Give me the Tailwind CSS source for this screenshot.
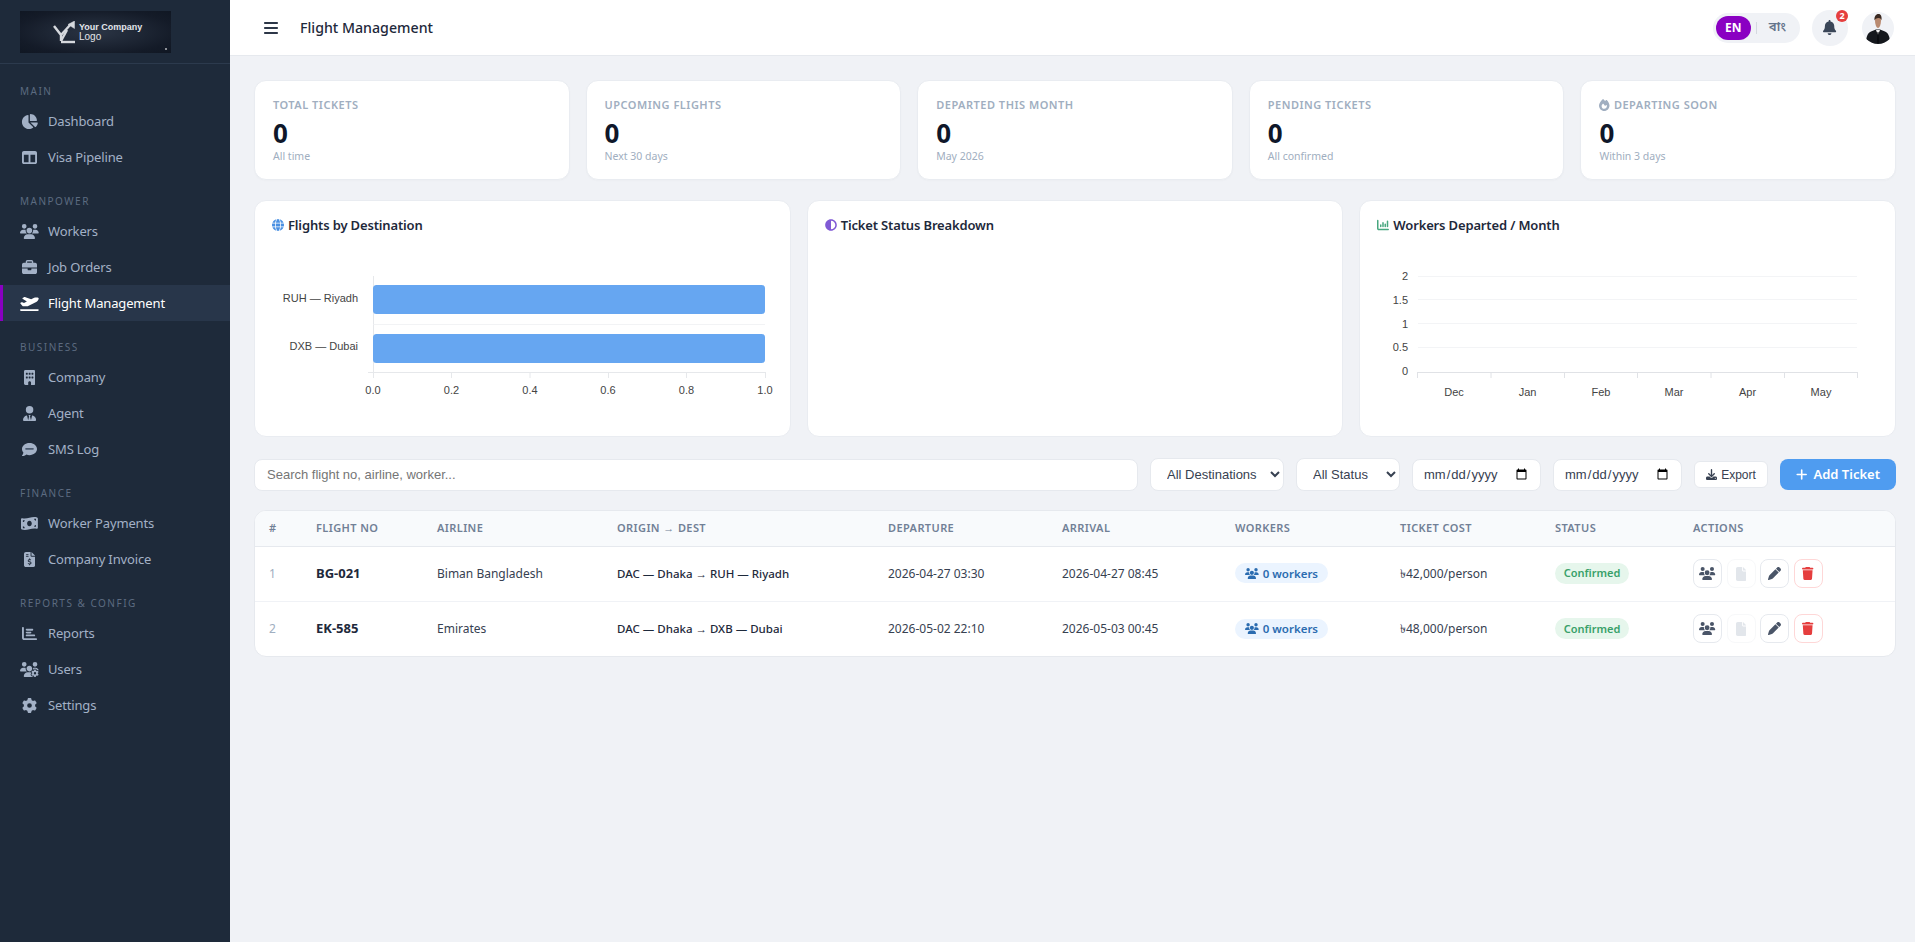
<!DOCTYPE html>
<html lang="en">
<head>
<meta charset="utf-8">
<title>Flight Management</title>
<script src="https://cdn.jsdelivr.net/npm/@tailwindcss/browser@4"></script>
</head>
<body class="h-screen overflow-hidden bg-[#f0f2f6] font-['Noto_Sans','Open_Sans',sans-serif]">
<div class="flex h-[942px]">
  <aside class="w-[230px] shrink-0 bg-[#1e2a3a] text-[#a3b1c6]">
    <div class="h-[64px] border-b border-[#2c3a4d] pl-5 pt-[11px]">
      <div class="relative flex h-[42px] w-[151px] items-center gap-[4px] bg-[radial-gradient(ellipse_at_center,#2b3545_0%,#141b28_75%,#101723_100%)] pl-[33px]">
        <svg viewBox="0 0 22 23" class="h-[23px] w-[22px] fill-none stroke-[#d6d9de]" stroke-width="2.400"><path d="M1 5l7 9v6"/><path d="M8 14L18 3"/><path d="M14 9L8 20"/><path d="M8 21h14"/><path d="M21.500 0v7.500l-6.500-4z" class="fill-[#d6d9de]" stroke-width="0.500"/></svg>
        <div class="font-['Liberation_Sans',sans-serif] text-[9px] leading-[10px] font-bold text-[#e2e5ea]">Your Company<br><span class="font-normal text-[10px]">Logo</span></div>
        <span class="absolute bottom-[3px] right-[4px] h-[2px] w-[2px] rounded-full bg-white/70"></span>
      </div>
    </div>
    <nav class="pt-px text-[13px] leading-[36px] tracking-[-0.15px]">
      <div class="pb-[5px] pl-5 pt-[19px] text-[10px] uppercase leading-[14px] tracking-[1.5px] text-[#5c6b80]">Main</div>
      <a class="flex h-[36px] items-center gap-[9px] pl-5"><span class="flex w-[19px] justify-center"><svg viewBox="0 0 576 512" class="h-[15px] fill-[#a3b1c6]"><path d="M304 240V16.6c0-9 7-16.6 16-16.6C443.7 0 544 100.3 544 224c0 9-7.6 16-16.6 16H304zM32 272C32 150.7 122.1 50.3 239 34.3c9.2-1.3 17 6.1 17 15.4V288L412.5 444.5c6.7 6.7 6.2 17.7-1.5 23.1C371.8 495.6 323.8 512 272 512C139.5 512 32 404.6 32 272zm526.4 16c9.3 0 16.6 7.8 15.4 17c-7.7 55.9-34.6 105.6-73.9 142.3c-6 5.6-15.4 5.2-21.2-.7L320 288H558.4z"/></svg></span>Dashboard</a>
      <a class="flex h-[36px] items-center gap-[9px] pl-5"><span class="flex w-[19px] justify-center"><svg viewBox="0 0 512 512" class="h-[15px] fill-[#a3b1c6]"><path d="M0 96C0 60.7 28.7 32 64 32H448c35.3 0 64 28.7 64 64V416c0 35.3-28.7 64-64 64H64c-35.3 0-64-28.7-64-64V96zm64 64V416H224V160H64zm384 0H288V416H448V160z"/></svg></span>Visa Pipeline</a>
      <div class="pb-[5px] pl-5 pt-[19px] text-[10px] uppercase leading-[14px] tracking-[1.5px] text-[#5c6b80]">Manpower</div>
      <a class="flex h-[36px] items-center gap-[9px] pl-5"><span class="flex w-[19px] justify-center"><svg viewBox="0 0 640 512" class="h-[15px] fill-[#a3b1c6]"><use href="#users"/></svg></span>Workers</a>
      <a class="flex h-[36px] items-center gap-[9px] pl-5"><span class="flex w-[19px] justify-center"><svg viewBox="0 0 512 512" class="h-[15px] fill-[#a3b1c6]"><path d="M184 48H328c4.4 0 8 3.6 8 8V96H176V56c0-4.4 3.6-8 8-8zm-56 8V96H64C28.7 96 0 124.7 0 160v96H192 320 512V160c0-35.3-28.7-64-64-64H384V56c0-30.9-25.1-56-56-56H184c-30.9 0-56 25.1-56 56zM512 288H320v32c0 17.7-14.3 32-32 32H224c-17.7 0-32-14.3-32-32V288H0V416c0 35.3 28.7 64 64 64H448c35.3 0 64-28.7 64-64V288z"/></svg></span>Job Orders</a>
      <a class="flex h-[36px] items-center gap-[9px] border-l-[3px] border-[#8a00c2] bg-[#28364a] pl-[17px] text-white"><span class="flex w-[19px] justify-center"><svg viewBox="0 0 640 512" class="h-[15px] fill-white"><path d="M381 114.9L186.1 41.8c-16.7-6.2-35.2-5.3-51.1 2.7L89.1 67.4C78 73 77.2 88.5 87.6 95.2l146.9 94.5L136 240 77.8 214.1c-8.7-3.9-18.8-3.7-27.3 .6L18.3 230.8c-9.3 4.7-11.8 16.8-5 24.7l73.1 85.3c6.1 7.1 15 11.2 24.3 11.2H248.4c5 0 9.9-1.2 14.3-3.4L535.6 212.2c46.5-23.3 82.5-63.3 100.8-112C645.9 75 627.2 48 600.2 48H542.8c-20.2 0-40.2 4.8-58.2 14L381 114.9zM0 480c0 17.7 14.3 32 32 32H608c17.7 0 32-14.3 32-32s-14.3-32-32-32H32c-17.7 0-32 14.3-32 32z"/></svg></span>Flight Management</a>
      <div class="pb-[5px] pl-5 pt-[19px] text-[10px] uppercase leading-[14px] tracking-[1.5px] text-[#5c6b80]">Business</div>
      <a class="flex h-[36px] items-center gap-[9px] pl-5"><span class="flex w-[19px] justify-center"><svg viewBox="0 0 384 512" class="h-[15px] fill-[#a3b1c6]"><path d="M48 0C21.5 0 0 21.5 0 48V464c0 26.5 21.5 48 48 48h96V432c0-26.5 21.5-48 48-48s48 21.5 48 48v80h96c26.5 0 48-21.5 48-48V48c0-26.5-21.5-48-48-48H48zM64 240c0-8.8 7.2-16 16-16h32c8.8 0 16 7.2 16 16v32c0 8.8-7.2 16-16 16H80c-8.8 0-16-7.2-16-16V240zm112-16h32c8.8 0 16 7.2 16 16v32c0 8.8-7.2 16-16 16H176c-8.8 0-16-7.2-16-16V240c0-8.8 7.2-16 16-16zm80 16c0-8.8 7.2-16 16-16h32c8.8 0 16 7.2 16 16v32c0 8.8-7.2 16-16 16H272c-8.8 0-16-7.2-16-16V240zM80 96h32c8.8 0 16 7.2 16 16v32c0 8.8-7.2 16-16 16H80c-8.8 0-16-7.2-16-16V112c0-8.8 7.2-16 16-16zm80 16c0-8.8 7.2-16 16-16h32c8.8 0 16 7.2 16 16v32c0 8.8-7.2 16-16 16H176c-8.8 0-16-7.2-16-16V112zM272 96h32c8.8 0 16 7.2 16 16v32c0 8.8-7.2 16-16 16H272c-8.8 0-16-7.2-16-16V112c0-8.8 7.2-16 16-16z"/></svg></span>Company</a>
      <a class="flex h-[36px] items-center gap-[9px] pl-5"><span class="flex w-[19px] justify-center"><svg viewBox="0 0 448 512" class="h-[15px] fill-[#a3b1c6]"><path d="M96 128a128 128 0 1 0 256 0A128 128 0 1 0 96 128zm94.5 200.2l18.6 31L175.8 483.1l-36-146.9c-2-8.1-9.8-13.4-17.9-11.3C51.9 342.4 0 405.8 0 481.3c0 17 13.8 30.7 30.7 30.7H162.5c0 0 0 0 .1 0H168 280h5.5c0 0 0 0 .1 0H417.3c17 0 30.7-13.8 30.7-30.7c0-75.5-51.9-138.9-121.9-156.4c-8.1-2-15.9 3.3-17.9 11.3l-36 146.9L238.9 359.2l18.6-31c6.4-10.7-1.3-24.2-13.7-24.2H224 204.3c-12.4 0-20.1 13.6-13.7 24.2z"/></svg></span>Agent</a>
      <a class="flex h-[36px] items-center gap-[9px] pl-5"><span class="flex w-[19px] justify-center"><svg viewBox="0 0 512 512" class="h-[15px] fill-[#a3b1c6]"><path d="M256 448c141.4 0 256-93.1 256-208S397.4 32 256 32S0 125.1 0 240c0 45.1 17.7 86.8 47.7 120.9c-1.9 24.5-11.4 46.3-21.4 62.9c-5.5 9.2-11.1 16.6-15.2 21.6c-2.1 2.5-3.7 4.4-4.9 5.7c-.6 .6-1 1.1-1.3 1.4l-.3 .3c-4.6 4.6-5.9 11.4-3.4 17.4c2.5 6 8.3 9.9 14.8 9.9c28.7 0 57.6-8.9 81.6-19.3c22.9-10 42.4-21.9 54.3-30.6c31.8 11.5 67 17.9 104.1 17.9z"/><rect x="110" y="205" width="292" height="60" rx="24" class="fill-[#4b5a6f]"/></svg></span>SMS Log</a>
      <div class="pb-[5px] pl-5 pt-[19px] text-[10px] uppercase leading-[14px] tracking-[1.5px] text-[#5c6b80]">Finance</div>
      <a class="flex h-[36px] items-center gap-[9px] pl-5"><span class="flex w-[19px] justify-center"><svg viewBox="0 0 576 512" class="h-[15px] fill-[#a3b1c6]"><path d="M0 112.5V422.3c0 18 10.1 35 27 41.3c87 32.5 174 10.3 261-11.9c79.8-20.3 159.6-40.7 239.3-18.9c23 6.3 48.7-9.5 48.7-33.4V89.7c0-18-10.1-35-27-41.3C462 15.9 375 38.1 288 60.3C208.2 80.6 128.4 100.9 48.7 79.1C25.6 72.8 0 88.6 0 112.5zM288 352c-44.2 0-80-43-80-96s35.8-96 80-96s80 43 80 96s-35.8 96-80 96zM64 352c35.3 0 64 28.7 64 64H64V352zm64-208c0 35.3-28.7 64-64 64V144h64zM512 304v64H448c0-35.3 28.7-64 64-64zM448 96h64v64c-35.3 0-64-28.7-64-64z"/></svg></span>Worker Payments</a>
      <a class="flex h-[36px] items-center gap-[9px] pl-5"><span class="flex w-[19px] justify-center"><svg viewBox="0 0 384 512" class="h-[15px] fill-[#a3b1c6]"><path d="M64 0C28.7 0 0 28.7 0 64V448c0 35.3 28.7 64 64 64H320c35.3 0 64-28.7 64-64V160H256c-17.7 0-32-14.3-32-32V0H64zM256 0V128H384L256 0zM64 80c0-8.8 7.2-16 16-16h64c8.8 0 16 7.2 16 16s-7.2 16-16 16H80c-8.8 0-16-7.2-16-16zm0 64c0-8.8 7.2-16 16-16h64c8.8 0 16 7.2 16 16s-7.2 16-16 16H80c-8.8 0-16-7.2-16-16zm128 72c8.8 0 16 7.2 16 16v17.3c8.5 1.2 16.7 3.1 24.1 5.1c8.5 2.3 13.6 11 11.3 19.6s-11 13.6-19.6 11.3c-11.1-3-22-5.2-32.1-5.3c-8.4-.1-17.4 1.8-23.6 5.5c-5.7 3.4-8.1 7.3-8.1 12.8c0 3.7 1.3 6.5 7.3 10.1c6.9 4.1 16.6 7.1 29.2 10.9l.5 .1c11.3 3.4 25.3 7.6 36.3 14.6c12.1 7.6 22.4 19.7 22.7 38.2c.3 19.3-9.6 33.3-22.9 41.6c-7.7 4.8-16.4 7.6-25.1 9.1V440c0 8.8-7.2 16-16 16s-16-7.2-16-16V422.2c-11.2-2.1-21.7-5.7-30.9-8.9c-2.1-.7-4.2-1.4-6.2-2.1c-8.4-2.8-12.9-11.9-10.1-20.2s11.9-12.9 20.2-10.1c2.5 .8 4.8 1.6 7.1 2.4c13.6 4.6 24.6 8.4 36.3 8.7c9.1 .3 17.9-1.7 23.7-5.3c5.1-3.2 7.9-7.3 7.8-14c-.1-4.6-1.8-7.8-7.7-11.6c-6.8-4.3-16.5-7.4-29-11.2l-1.6-.5c-11-3.3-24.3-7.3-34.8-13.7c-12-7.2-22.6-18.9-22.7-37.3c-.1-19.4 10.8-32.8 23.8-40.5c7.5-4.4 15.8-7.2 24.1-8.7V232c0-8.8 7.2-16 16-16z"/></svg></span>Company Invoice</a>
      <div class="pb-[5px] pl-5 pt-[19px] text-[10px] uppercase leading-[14px] tracking-[1.5px] text-[#5c6b80]">Reports &amp; Config</div>
      <a class="flex h-[36px] items-center gap-[9px] pl-5"><span class="flex w-[19px] justify-center"><svg viewBox="0 0 512 512" class="h-[15px] fill-[#a3b1c6]"><path d="M32 32c17.7 0 32 14.3 32 32V400c0 8.8 7.2 16 16 16H480c17.7 0 32 14.3 32 32s-14.3 32-32 32H80c-44.2 0-80-35.8-80-80V64C0 46.3 14.3 32 32 32zm96 96c0-17.7 14.3-32 32-32l192 0c17.7 0 32 14.3 32 32s-14.3 32-32 32l-192 0c-17.7 0-32-14.3-32-32zm32 64H288c17.7 0 32 14.3 32 32s-14.3 32-32 32H160c-17.7 0-32-14.3-32-32s14.3-32 32-32zm0 96H416c17.7 0 32 14.3 32 32s-14.3 32-32 32H160c-17.7 0-32-14.3-32-32s14.3-32 32-32z"/></svg></span>Reports</a>
      <a class="flex h-[36px] items-center gap-[9px] pl-5"><span class="flex w-[19px] justify-center"><svg viewBox="0 0 640 512" class="h-[15px] fill-[#a3b1c6]"><path d="M144 160A80 80 0 1 0 144 0a80 80 0 1 0 0 160zm368 0A80 80 0 1 0 512 0a80 80 0 1 0 0 160zM0 298.7C0 310.4 9.6 320 21.3 320H234.7c.2 0 .4 0 .7 0c-26.6-23.5-43.3-57.8-43.3-96c0-7.6 .7-15 1.9-22.3c-13.6-6.3-28.7-9.7-44.6-9.7H106.7C47.8 192 0 239.8 0 298.7zM320 320c24 0 45.9-8.8 62.7-23.3c2.5-3.7 5.2-7.3 8-10.7c2.7-3.3 5.7-6.1 9-8.3C410 262.3 416 243.9 416 224c0-53-43-96-96-96s-96 43-96 96s43 96 96 96zm65.4 60.2c-10.3-5.9-18.1-16.2-20.8-28.2H261.3C187.7 352 128 411.7 128 485.3c0 14.7 11.9 26.7 26.7 26.7H455.2c-2.1-5.2-3.2-10.9-3.2-16.4v-3c-1.3-.7-2.7-1.5-4-2.3l-2.6 1.5c-16.8 9.7-40.5 8-54.7-9.7c-4.5-5.6-8.6-11.5-12.4-17.6l-2.6-4.5c-3.4-6.2-6.4-12.6-9-19.3c-8.2-21.2 2.2-42.6 19-52.3l2.7-1.5c0-.8 0-1.5 0-2.3s0-1.5 0-2.3l-2.7-1.5zM533.3 192H490.7c-15.9 0-31 3.5-44.6 9.7c1.3 7.2 1.9 14.7 1.9 22.3c0 17.4-3.5 33.9-9.7 49c2.5 .9 4.9 2 7.1 3.3l2.6 1.5c1.3-.8 2.6-1.6 4-2.3v-3c0-19.4 13.3-39.1 35.8-42.6c7.9-1.2 16-1.9 24.2-1.9s16.3 .6 24.2 1.9c22.5 3.5 35.8 23.2 35.8 42.6v3c1.3 .7 2.7 1.5 4 2.3l2.6-1.5c16.8-9.7 40.5-8 54.7 9.7c2.3 2.8 4.5 5.8 6.6 8.7c-2.1-57.1-49-102.7-106.6-102.7zm91.3 163.9c6.3-3.6 9.5-11.1 6.8-18c-2.1-5.5-4.6-10.8-7.4-15.9l-2.3-4c-3.1-5.1-6.5-9.9-10.2-14.5c-4.6-5.7-12.7-6.7-19-3L574.4 311c-8.9-7.6-19.1-13.6-30.4-17.6v-21c0-7.3-4.9-13.8-12.1-14.9c-6.5-1-13.1-1.5-19.9-1.5s-13.4 .5-19.9 1.5c-7.2 1.1-12.1 7.6-12.1 14.9v21c-11.2 4-21.5 9.9-30.4 17.6l-18.2-10.5c-6.3-3.6-14.4-2.7-19 3c-3.7 4.6-7.1 9.4-10.2 14.5l-2.3 3.9c-2.8 5.1-5.3 10.4-7.4 15.9c-2.6 6.8 .5 14.3 6.8 17.9l18.2 10.5c-1 5.7-1.6 11.6-1.6 17.6s.6 11.9 1.6 17.5l-18.2 10.5c-6.3 3.6-9.5 11.1-6.8 17.9c2.1 5.5 4.6 10.7 7.4 15.8l2.4 4.1c3 5.1 6.4 9.9 10.1 14.5c4.6 5.7 12.7 6.7 19 3L449.6 457c8.9 7.6 19.2 13.6 30.4 17.6v21c0 7.3 4.9 13.8 12.1 14.9c6.5 1 13.1 1.5 19.9 1.5s13.4-.5 19.9-1.5c7.2-1.1 12.1-7.6 12.1-14.9v-21c11.2-4 21.5-9.9 30.4-17.6l18.2 10.5c6.3 3.6 14.4 2.7 19-3c3.7-4.6 7.1-9.4 10.2-14.4l2.4-4.2c2.8-5.1 5.3-10.3 7.4-15.8c2.6-6.8-.5-14.3-6.8-17.9l-18.2-10.5c1-5.7 1.6-11.6 1.6-17.5s-.6-11.9-1.6-17.6l18.2-10.5zM472 384a40 40 0 1 1 80 0 40 40 0 1 1 -80 0z"/></svg></span>Users</a>
      <a class="flex h-[36px] items-center gap-[9px] pl-5"><span class="flex w-[19px] justify-center"><svg viewBox="0 0 512 512" class="h-[15px] fill-[#a3b1c6]"><path d="M495.9 166.6c3.2 8.7 .5 18.4-6.4 24.6l-43.3 39.4c1.1 8.3 1.7 16.8 1.7 25.4s-.6 17.1-1.7 25.4l43.3 39.4c6.9 6.2 9.6 15.9 6.4 24.6c-4.4 11.9-9.7 23.3-15.8 34.3l-4.7 8.1c-6.6 11-14 21.4-22.1 31.2c-5.9 7.2-15.7 9.6-24.5 6.8l-55.7-17.7c-13.4 10.3-28.2 18.9-44 25.4l-12.5 57.1c-2 9.1-9 16.3-18.2 17.8c-13.8 2.3-28 3.5-42.5 3.5s-28.7-1.2-42.5-3.5c-9.2-1.5-16.2-8.7-18.2-17.8l-12.5-57.1c-15.8-6.5-30.6-15.1-44-25.4L83.1 425.9c-8.8 2.8-18.6 .3-24.5-6.8c-8.1-9.8-15.5-20.2-22.1-31.2l-4.7-8.1c-6.1-11-11.4-22.4-15.8-34.3c-3.2-8.7-.5-18.4 6.4-24.6l43.3-39.4C64.6 273.1 64 264.6 64 256s.6-17.1 1.7-25.4L22.4 191.2c-6.9-6.2-9.6-15.9-6.4-24.6c4.4-11.9 9.7-23.3 15.8-34.3l4.7-8.1c6.6-11 14-21.4 22.1-31.2c5.9-7.2 15.7-9.6 24.5-6.8l55.7 17.7c13.4-10.3 28.2-18.9 44-25.4l12.5-57.1c2-9.1 9-16.3 18.2-17.8C227.3 1.2 241.5 0 256 0s28.7 1.2 42.5 3.5c9.2 1.5 16.2 8.7 18.2 17.8l12.5 57.1c15.8 6.5 30.6 15.1 44 25.4l55.7-17.7c8.8-2.8 18.6-.3 24.5 6.8c8.1 9.8 15.5 20.2 22.1 31.2l4.7 8.1c6.1 11 11.4 22.4 15.8 34.3zM256 336a80 80 0 1 0 0-160 80 80 0 1 0 0 160z"/></svg></span>Settings</a>
    </nav>
  </aside>

  <main class="min-w-0 flex-1">
    <header class="flex h-[56px] items-center border-b border-[#e6e9ee] bg-white pl-[34px] pr-[21px]">
      <svg viewBox="0 0 448 512" class="h-[16px] w-[14px] fill-[#2d3748]"><path d="M0 96C0 78.3 14.3 64 32 64H416c17.7 0 32 14.3 32 32s-14.3 32-32 32H32C14.3 128 0 113.7 0 96zM0 256c0-17.7 14.3-32 32-32H416c17.7 0 32 14.3 32 32s-14.3 32-32 32H32c-17.7 0-32-14.3-32-32zM448 416c0 17.7-14.3 32-32 32H32c-17.7 0-32-14.3-32-32s14.3-32 32-32H416c17.7 0 32 14.3 32 32z"/></svg>
      <h1 class="ml-[22px] text-[14.200px] font-medium text-[#1e293b]">Flight Management</h1>
      <div class="ml-auto flex items-center rounded-full bg-[#f0f2f6] p-[3px] pr-[14px]">
        <span class="flex h-[24px] w-[35px] items-center justify-center rounded-full bg-[#8a00c2] text-[12px] font-bold text-white">EN</span>
        <span class="ml-[5px] h-[12px] w-px bg-[#d5d9e0]"></span>
        <span class="ml-[12px] font-['Noto_Sans_Bengali','Noto_Sans',sans-serif] text-[13px] font-semibold text-[#64748b]">বাং</span>
      </div>
      <div class="relative ml-[12px] flex h-[36px] w-[36px] items-center justify-center rounded-full bg-[#f0f2f6]">
        <svg viewBox="0 0 448 512" class="h-[15px] fill-[#3a4658]"><path d="M224 0c-17.7 0-32 14.3-32 32V51.2C119 66 64 130.6 64 208v18.8c0 47-17.3 92.4-48.5 127.6l-7.4 8.3c-8.4 9.4-10.4 22.9-5.3 34.4S19.4 416 32 416H416c12.6 0 24-7.4 29.2-18.9s3.1-25-5.3-34.4l-7.4-8.3C401.3 319.2 384 273.9 384 226.8V208c0-77.4-55-142-128-156.8V32c0-17.7-14.3-32-32-32zm45.3 493.3c12-12 18.7-28.3 18.7-45.3H224 160c0 17 6.7 33.3 18.7 45.3s28.3 18.7 45.3 18.7s33.3-6.7 45.3-18.7z"/></svg>
        <span class="absolute right-0 top-0 flex h-[12px] w-[12px] items-center justify-center rounded-full bg-[#e53e3e] text-[9px] font-bold leading-none text-white">2</span>
      </div>
      <svg viewBox="0 0 32 32" class="ml-[14px] h-[32px] w-[32px] rounded-full bg-[#f0f2f6]">
        <path d="M4 32c0-7 1.500-11 5-12.500l5-2h4l5 2c3.500 1.500 5 5.500 5 12.500z" fill="#15181d"/>
        <path d="M14 18l2 5 2-5z" fill="#f2f2f2"/><path d="M15.500 20h1l.6 10-1.100 2-1.100-2z" fill="#0a0c10"/>
        <path d="M13 8c0-2.500 1.200-4 3-4s3 1.500 3 4c0 4-1.200 8-3 8s-3-4-3-8z" fill="#b98a70"/>
        <path d="M12.500 8.500c-.5-4 1.500-6.500 4-6.500s3.500 2.500 3 6.500c-.3-1.500-1-2.500-3-2.500s-3.500 1-4 2.500z" fill="#3a2a22"/>
      </svg>
    </header>

    <div class="pb-6 pl-[24px] pr-[19px] pt-[24px]">
      <section class="grid grid-cols-5 gap-4">
        <div class="h-[100px] rounded-[12px] border border-[#e9ecf1] bg-white px-[18px] pt-[15px] shadow-[0_1px_2px_rgba(0,0,0,0.02)]">
          <div class="text-[11px] font-semibold uppercase leading-[18px] tracking-[0.5px] text-[#a0aec0]">Total Tickets</div>
          <div class="mt-[5px] text-[26px] font-bold leading-[28px] text-[#0f172a]">0</div>
          <div class="text-[10.500px] leading-[18px] text-[#a0aec0]">All time</div>
        </div>
        <div class="h-[100px] rounded-[12px] border border-[#e9ecf1] bg-white px-[18px] pt-[15px] shadow-[0_1px_2px_rgba(0,0,0,0.02)]">
          <div class="text-[11px] font-semibold uppercase leading-[18px] tracking-[0.5px] text-[#a0aec0]">Upcoming Flights</div>
          <div class="mt-[5px] text-[26px] font-bold leading-[28px] text-[#0f172a]">0</div>
          <div class="text-[10.500px] leading-[18px] text-[#a0aec0]">Next 30 days</div>
        </div>
        <div class="h-[100px] rounded-[12px] border border-[#e9ecf1] bg-white px-[18px] pt-[15px] shadow-[0_1px_2px_rgba(0,0,0,0.02)]">
          <div class="text-[11px] font-semibold uppercase leading-[18px] tracking-[0.5px] text-[#a0aec0]">Departed This Month</div>
          <div class="mt-[5px] text-[26px] font-bold leading-[28px] text-[#0f172a]">0</div>
          <div class="text-[10.500px] leading-[18px] text-[#a0aec0]">May 2026</div>
        </div>
        <div class="h-[100px] rounded-[12px] border border-[#e9ecf1] bg-white px-[18px] pt-[15px] shadow-[0_1px_2px_rgba(0,0,0,0.02)]">
          <div class="text-[11px] font-semibold uppercase leading-[18px] tracking-[0.5px] text-[#a0aec0]">Pending Tickets</div>
          <div class="mt-[5px] text-[26px] font-bold leading-[28px] text-[#0f172a]">0</div>
          <div class="text-[10.500px] leading-[18px] text-[#a0aec0]">All confirmed</div>
        </div>
        <div class="h-[100px] rounded-[12px] border border-[#e9ecf1] bg-white px-[18px] pt-[15px] shadow-[0_1px_2px_rgba(0,0,0,0.02)]">
          <div class="flex items-center gap-[4px] text-[11px] font-semibold uppercase leading-[18px] tracking-[0.5px] text-[#a0aec0]"><svg viewBox="0 0 448 512" class="h-[12px] fill-[#a0aec0]"><path d="M159.3 5.4c7.8-7.3 19.9-7.2 27.7 .1c27.6 25.9 53.5 53.8 77.7 84c11-14.4 23.5-30.1 37-42.9c7.9-7.4 20.1-7.4 28 .1c34.6 33 63.9 76.6 84.5 118c20.3 40.8 33.8 82.5 33.8 111.9C448 404.2 348.2 512 224 512C98.4 512 0 404.1 0 276.5c0-38.4 17.8-85.3 45.4-131.7C73.3 97.7 112.7 48.6 159.3 5.4zM225.7 416c25.3 0 47.7-7 68.8-21c42.1-29.4 53.4-88.2 28.1-134.4c-4.5-9-16-9.6-22.5-2l-25.2 29.3c-6.6 7.6-18.5 7.4-24.7-.5c-16.5-21-46-58.5-62.8-79.8c-6.3-8-18.3-8.1-24.7-.1c-33.8 42.5-50.8 69.3-50.8 99.4C112 375.4 162.6 416 225.7 416z"/></svg>Departing Soon</div>
          <div class="mt-[5px] text-[26px] font-bold leading-[28px] text-[#0f172a]">0</div>
          <div class="text-[10.500px] leading-[18px] text-[#a0aec0]">Within 3 days</div>
        </div>
      </section>

      <section class="mt-[20px] grid grid-cols-3 gap-4">
        <div class="relative h-[237px] rounded-[12px] border border-[#e9ecf1] bg-white">
          <div class="flex items-center gap-[4px] pl-[17px] pt-[15px] text-[13px] font-semibold leading-[18px] tracking-[-0.15px] text-[#1e293b]"><svg viewBox="0 0 512 512" class="h-[12px] fill-[#4a90e2]"><path d="M352 256c0 22.2-1.2 43.6-3.3 64H163.3c-2.2-20.4-3.3-41.8-3.3-64s1.2-43.6 3.3-64H348.7c2.2 20.4 3.3 41.8 3.3 64zm28.8-64H503.9c5.3 20.5 8.1 41.9 8.1 64s-2.8 43.5-8.1 64H380.8c2.1-20.6 3.2-42 3.2-64s-1.1-43.4-3.2-64zm112.6-32H376.7c-10-63.9-29.8-117.4-55.3-151.6c78.3 20.7 142 77.5 171.9 151.6zm-149.1 0H167.7c6.1-36.4 15.5-68.6 27-94.7c10.5-23.6 22.2-40.7 33.5-51.5C239.4 3.2 248.7 0 256 0s16.6 3.2 27.8 13.8c11.3 10.8 23 27.9 33.5 51.5c11.6 26 20.9 58.2 27 94.7zm-209 0H18.6C48.6 85.9 112.2 29.1 190.6 8.4C165.1 42.6 145.3 96.1 135.3 160zM8.1 192H131.2c-2.1 20.6-3.2 42-3.2 64s1.1 43.4 3.2 64H8.1C2.8 299.5 0 278.1 0 256s2.8-43.5 8.1-64zM194.7 446.6c-11.6-26-20.9-58.2-27-94.6H344.3c-6.1 36.4-15.5 68.6-27 94.6c-10.5 23.6-22.2 40.7-33.5 51.5C272.6 508.8 263.3 512 256 512s-16.6-3.2-27.8-13.8c-11.3-10.8-23-27.9-33.5-51.5zM135.3 352c10 63.9 29.8 117.4 55.3 151.6C112.2 482.9 48.6 426.1 18.6 352H135.3zm358.1 0c-30 74.1-93.6 130.9-171.9 151.6c25.5-34.2 45.2-87.7 55.3-151.6H493.4z"/></svg>Flights by Destination</div>
          <svg viewBox="0 0 536 186" class="absolute left-0 top-[49px] h-[186px] w-[536px] font-['Liberation_Sans',sans-serif]" font-size="11" fill="#444">
            <g stroke="#e6e8eb"><path d="M118.500 26v102"/><path d="M118.500 74.500H510" stroke="#f2f3f5"/><path d="M113 122.500H511"/><path d="M118.500 122v6M196.500 122v6M275 122v6M353.500 122v6M431.500 122v6M510.500 122v6"/></g>
            <rect x="118" y="35" width="392" height="29" rx="3.500" fill="#66a6f1"/>
            <rect x="118" y="84" width="392" height="29" rx="3.500" fill="#66a6f1"/>
            <text x="103" y="52" text-anchor="end">RUH — Riyadh</text>
            <text x="103" y="100" text-anchor="end">DXB — Dubai</text>
            <g text-anchor="middle"><text x="118" y="144">0.0</text><text x="196.500" y="144">0.2</text><text x="275" y="144">0.4</text><text x="353" y="144">0.6</text><text x="431.500" y="144">0.8</text><text x="510" y="144">1.0</text></g>
          </svg>
        </div>
        <div class="h-[237px] rounded-[12px] border border-[#e9ecf1] bg-white">
          <div class="flex items-center gap-[4px] pl-[17px] pt-[15px] text-[13px] font-semibold leading-[18px] tracking-[-0.15px] text-[#1e293b]"><svg viewBox="0 0 512 512" class="h-[12px] fill-[#805ad5]"><path d="M8 256c0 136.966 111.033 248 248 248s248-111.034 248-248S392.966 8 256 8 8 119.033 8 256zm248 184V72c101.705 0 184 82.311 184 184 0 101.705-82.311 184-184 184z"/></svg>Ticket Status Breakdown</div>
        </div>
        <div class="relative h-[237px] rounded-[12px] border border-[#e9ecf1] bg-white">
          <div class="flex items-center gap-[4px] pl-[17px] pt-[15px] text-[13px] font-semibold leading-[18px] tracking-[-0.15px] text-[#1e293b]"><svg viewBox="0 0 512 512" class="h-[12px] fill-[#48a77f]"><path d="M32 32c17.7 0 32 14.3 32 32V400c0 8.8 7.2 16 16 16H480c17.7 0 32 14.3 32 32s-14.3 32-32 32H80c-44.2 0-80-35.8-80-80V64C0 46.3 14.3 32 32 32zM160 224c17.7 0 32 14.3 32 32v64c0 17.700-14.3 32-32 32s-32-14.3-32-32V256c0-17.700 14.3-32 32-32zm128-64V320c0 17.700-14.3 32-32 32s-32-14.3-32-32V160c0-17.700 14.3-32 32-32s32 14.3 32 32zm64 32c17.700 0 32 14.3 32 32v96c0 17.700-14.3 32-32 32s-32-14.3-32-32V224c0-17.700 14.3-32 32-32zM480 96V320c0 17.700-14.3 32-32 32s-32-14.3-32-32V96c0-17.700 14.3-32 32-32s32 14.3 32 32z"/></svg>Workers Departed / Month</div>
          <svg viewBox="0 0 536 186" class="absolute left-0 top-[49px] h-[186px] w-[536px] font-['Liberation_Sans',sans-serif]" font-size="11" fill="#444">
            <g stroke="#f3f4f6"><path d="M58 26.500H497"/><path d="M58 49.500H497"/><path d="M58 73.500H497"/><path d="M58 97.500H497"/></g>
            <g stroke="#e0e2e6"><path d="M57.500 122.500H497.500"/><path d="M57.500 122v6M131 122v6M204.500 122v6M277.500 122v6M351 122v6M424.500 122v6M497.500 122v6"/></g>
            <g text-anchor="end"><text x="48" y="30">2</text><text x="48" y="54">1.5</text><text x="48" y="78">1</text><text x="48" y="101">0.5</text><text x="48" y="125">0</text></g>
            <g text-anchor="middle"><text x="94" y="146">Dec</text><text x="167.500" y="146">Jan</text><text x="241" y="146">Feb</text><text x="314" y="146">Mar</text><text x="387.500" y="146">Apr</text><text x="461" y="146">May</text></g>
          </svg>
        </div>
      </section>

      <section class="mt-[21px] flex items-center gap-[12px] font-['Liberation_Sans',sans-serif] text-[13px] text-[#374151]">
        <input type="text" placeholder="Search flight no, airline, worker..." class="h-[32px] min-w-0 flex-1 rounded-[8px] border border-[#e6e9ee] bg-white px-[12px] text-[13px] outline-none placeholder:text-[#757575]">
        <select class="h-[33px] w-[134px] rounded-[8px] border border-[#e6e9ee] bg-white pl-[12px] pr-[2px] text-[13px]"><option>All Destinations</option></select>
        <select class="h-[33px] w-[104px] rounded-[8px] border border-[#e6e9ee] bg-white pl-[12px] pr-[2px] text-[13px]"><option>All Status</option></select>
        <input type="date" class="h-[32px] w-[129px] rounded-[8px] border border-[#e6e9ee] bg-white px-[10px] text-[13px]">
        <input type="date" class="h-[32px] w-[129px] rounded-[8px] border border-[#e6e9ee] bg-white px-[10px] text-[13px]">
        <button class="flex h-[27px] w-[74px] items-center justify-center gap-[4px] rounded-[6px] border border-[#e6e9ee] bg-white text-[12px] text-[#374151]"><svg viewBox="0 0 512 512" class="h-[11px] fill-[#374151]"><path d="M288 32c0-17.7-14.3-32-32-32s-32 14.3-32 32V274.7l-73.4-73.4c-12.5-12.5-32.8-12.5-45.3 0s-12.500 32.800 0 45.300l128 128c12.500 12.500 32.800 12.500 45.300 0l128-128c12.500-12.500 12.500-32.800 0-45.300s-32.800-12.500-45.300 0L288 274.700V32zM64 352c-35.300 0-64 28.700-64 64v32c0 35.300 28.700 64 64 64H448c35.300 0 64-28.700 64-64V416c0-35.300-28.700-64-64-64H346.500l-45.300 45.300c-25 25-65.500 25-90.500 0L165.500 352H64zm368 56a24 24 0 1 1 0 48 24 24 0 1 1 0-48z"/></svg>Export</button>
        <button class="flex h-[31px] w-[116px] items-center justify-center gap-[6px] rounded-[8px] bg-[#4f9cf0] font-['Noto_Sans',sans-serif] text-[13px] font-semibold text-white"><svg viewBox="0 0 448 512" class="h-[13px] fill-white"><path d="M256 80c0-17.700-14.300-32-32-32s-32 14.300-32 32V224H48c-17.700 0-32 14.300-32 32s14.300 32 32 32H192V432c0 17.700 14.300 32 32 32s32-14.300 32-32V288H400c17.700 0 32-14.300 32-32s-14.300-32-32-32H256V80z"/></svg>Add Ticket</button>
      </section>

      <section class="mt-[19px] overflow-hidden rounded-[12px] border border-[#e6e9ee] bg-white">
        <table class="w-full table-fixed border-collapse text-left">
          <thead>
            <tr class="h-[35px] border-b border-[#e6e9ee] bg-[#f8fafc] text-[11px] font-semibold uppercase tracking-[0.4px] text-[#718096]">
              <th class="w-[47px] pl-[14px] font-semibold">#</th>
              <th class="w-[121px] pl-[14px] font-semibold">Flight No</th>
              <th class="w-[180px] pl-[14px] font-semibold">Airline</th>
              <th class="w-[271px] pl-[14px] font-semibold">Origin → Dest</th>
              <th class="w-[174px] pl-[14px] font-semibold">Departure</th>
              <th class="w-[173px] pl-[14px] font-semibold">Arrival</th>
              <th class="w-[165px] pl-[14px] font-semibold">Workers</th>
              <th class="w-[155px] pl-[14px] font-semibold">Ticket Cost</th>
              <th class="w-[138px] pl-[14px] font-semibold">Status</th>
              <th class="pl-[14px] font-semibold">Actions</th>
            </tr>
          </thead>
          <tbody class="text-[12px] text-[#374151]">
            <tr class="h-[55px] border-b border-[#f0f2f6]">
              <td class="pl-[14px] text-[#a0aec0]">1</td>
              <td class="pl-[14px] text-[13px] font-bold text-[#1e293b]">BG-021</td>
              <td class="pl-[14px]">Biman Bangladesh</td>
              <td class="pl-[14px] text-[11.500px] font-medium text-[#1e293b]">DAC — Dhaka → RUH — Riyadh</td>
              <td class="pl-[14px]">2026-04-27 03:30</td>
              <td class="pl-[14px]">2026-04-27 08:45</td>
              <td class="pl-[14px]"><span class="inline-flex h-[20px] w-[93px] items-center justify-center gap-[4px] rounded-full bg-[#ebf4ff] text-[11.500px] font-semibold text-[#2b6cb0]"><svg viewBox="0 0 640 512" class="h-[11px] fill-[#2b6cb0]"><use href="#users"/></svg>0 workers</span></td>
              <td class="pl-[14px]">৳42,000/person</td>
              <td class="pl-[14px]"><span class="inline-flex h-[21px] w-[74px] items-center justify-center rounded-full bg-[#e6f6ec] text-[11px] font-semibold text-[#38a169]">Confirmed</span></td>
              <td class="pl-[14px]">
                <div class="flex gap-[4.500px]">
                  <button class="flex h-[29px] w-[29px] items-center justify-center rounded-[8px] border border-[#e6e9ee]"><svg viewBox="0 0 640 512" class="h-[13px] fill-[#4a5568]"><use href="#users"/></svg></button>
                  <button class="flex h-[29px] w-[29px] items-center justify-center rounded-[8px] border border-[#e6e9ee] opacity-30"><svg viewBox="0 0 384 512" class="h-[14px] fill-[#a0aec0]"><use href="#file"/></svg></button>
                  <button class="flex h-[29px] w-[29px] items-center justify-center rounded-[8px] border border-[#e6e9ee]"><svg viewBox="0 0 512 512" class="h-[13px] fill-[#4a5568]"><use href="#pen"/></svg></button>
                  <button class="flex h-[29px] w-[29px] items-center justify-center rounded-[8px] border border-[#fed7d7]"><svg viewBox="0 0 448 512" class="h-[13px] fill-[#e53e3e]"><use href="#trash"/></svg></button>
                </div>
              </td>
            </tr>
            <tr class="h-[55px]">
              <td class="pl-[14px] text-[#a0aec0]">2</td>
              <td class="pl-[14px] text-[13px] font-bold text-[#1e293b]">EK-585</td>
              <td class="pl-[14px]">Emirates</td>
              <td class="pl-[14px] text-[11.500px] font-medium text-[#1e293b]">DAC — Dhaka → DXB — Dubai</td>
              <td class="pl-[14px]">2026-05-02 22:10</td>
              <td class="pl-[14px]">2026-05-03 00:45</td>
              <td class="pl-[14px]"><span class="inline-flex h-[20px] w-[93px] items-center justify-center gap-[4px] rounded-full bg-[#ebf4ff] text-[11.500px] font-semibold text-[#2b6cb0]"><svg viewBox="0 0 640 512" class="h-[11px] fill-[#2b6cb0]"><use href="#users"/></svg>0 workers</span></td>
              <td class="pl-[14px]">৳48,000/person</td>
              <td class="pl-[14px]"><span class="inline-flex h-[21px] w-[74px] items-center justify-center rounded-full bg-[#e6f6ec] text-[11px] font-semibold text-[#38a169]">Confirmed</span></td>
              <td class="pl-[14px]">
                <div class="flex gap-[4.500px]">
                  <button class="flex h-[29px] w-[29px] items-center justify-center rounded-[8px] border border-[#e6e9ee]"><svg viewBox="0 0 640 512" class="h-[13px] fill-[#4a5568]"><use href="#users"/></svg></button>
                  <button class="flex h-[29px] w-[29px] items-center justify-center rounded-[8px] border border-[#e6e9ee] opacity-30"><svg viewBox="0 0 384 512" class="h-[14px] fill-[#a0aec0]"><use href="#file"/></svg></button>
                  <button class="flex h-[29px] w-[29px] items-center justify-center rounded-[8px] border border-[#e6e9ee]"><svg viewBox="0 0 512 512" class="h-[13px] fill-[#4a5568]"><use href="#pen"/></svg></button>
                  <button class="flex h-[29px] w-[29px] items-center justify-center rounded-[8px] border border-[#fed7d7]"><svg viewBox="0 0 448 512" class="h-[13px] fill-[#e53e3e]"><use href="#trash"/></svg></button>
                </div>
              </td>
            </tr>
          </tbody>
        </table>
      </section>
    </div>
  </main>
</div>
<svg class="hidden"><defs>
  <path id="users" d="M144 0a80 80 0 1 1 0 160A80 80 0 1 1 144 0zM512 0a80 80 0 1 1 0 160A80 80 0 1 1 512 0zM0 298.700C0 239.800 47.800 192 106.700 192h42.700c15.900 0 31 3.500 44.600 9.700c-1.300 7.200-1.900 14.700-1.900 22.300c0 38.200 16.800 72.500 43.300 96c-.2 0-.4 0-.7 0H21.300C9.600 320 0 310.400 0 298.700zM405.300 320c-.2 0-.4 0-.7 0c26.600-23.500 43.300-57.800 43.300-96c0-7.600-.7-15-1.900-22.300c13.600-6.300 28.700-9.700 44.600-9.700h42.700C592.200 192 640 239.800 640 298.700c0 11.800-9.600 21.300-21.300 21.300H405.300zM224 224a96 96 0 1 1 192 0 96 96 0 1 1 -192 0zM128 485.300C128 411.700 187.700 352 261.300 352H378.700C452.300 352 512 411.700 512 485.300c0 14.700-11.900 26.700-26.700 26.700H154.700c-14.700 0-26.700-11.900-26.700-26.700z"/>
  <path id="trash" d="M135.200 17.700L128 32H32C14.300 32 0 46.300 0 64S14.300 96 32 96H416c17.700 0 32-14.300 32-32s-14.300-32-32-32H320l-7.200-14.300C307.400 6.800 296.300 0 284.200 0H163.800c-12.100 0-23.200 6.800-28.600 17.700zM416 128H32L53.200 467c1.600 25.300 22.600 45 47.900 45H346.900c25.300 0 46.300-19.700 47.900-45L416 128z"/>
  <path id="pen" d="M362.700 19.300L314.300 67.700 444.300 197.700l48.400-48.400c25-25 25-65.500 0-90.500L453.300 19.300c-25-25-65.500-25-90.500 0zm-71 71L58.600 323.500c-10.400 10.400-18 23.300-22.200 37.400L1 481.200C-1.500 489.700 .8 498.800 7 505s15.300 8.500 23.700 6.100l120.300-35.400c14.100-4.200 27-11.800 37.400-22.200L421.700 220.300 291.700 90.300z"/>
  <path id="file" d="M0 64C0 28.700 28.700 0 64 0H224V128c0 17.700 14.300 32 32 32H384V448c0 35.300-28.700 64-64 64H64c-35.300 0-64-28.700-64-64V64zm384 64H256V0L384 128z"/>
</defs></svg>
</body>
</html>
